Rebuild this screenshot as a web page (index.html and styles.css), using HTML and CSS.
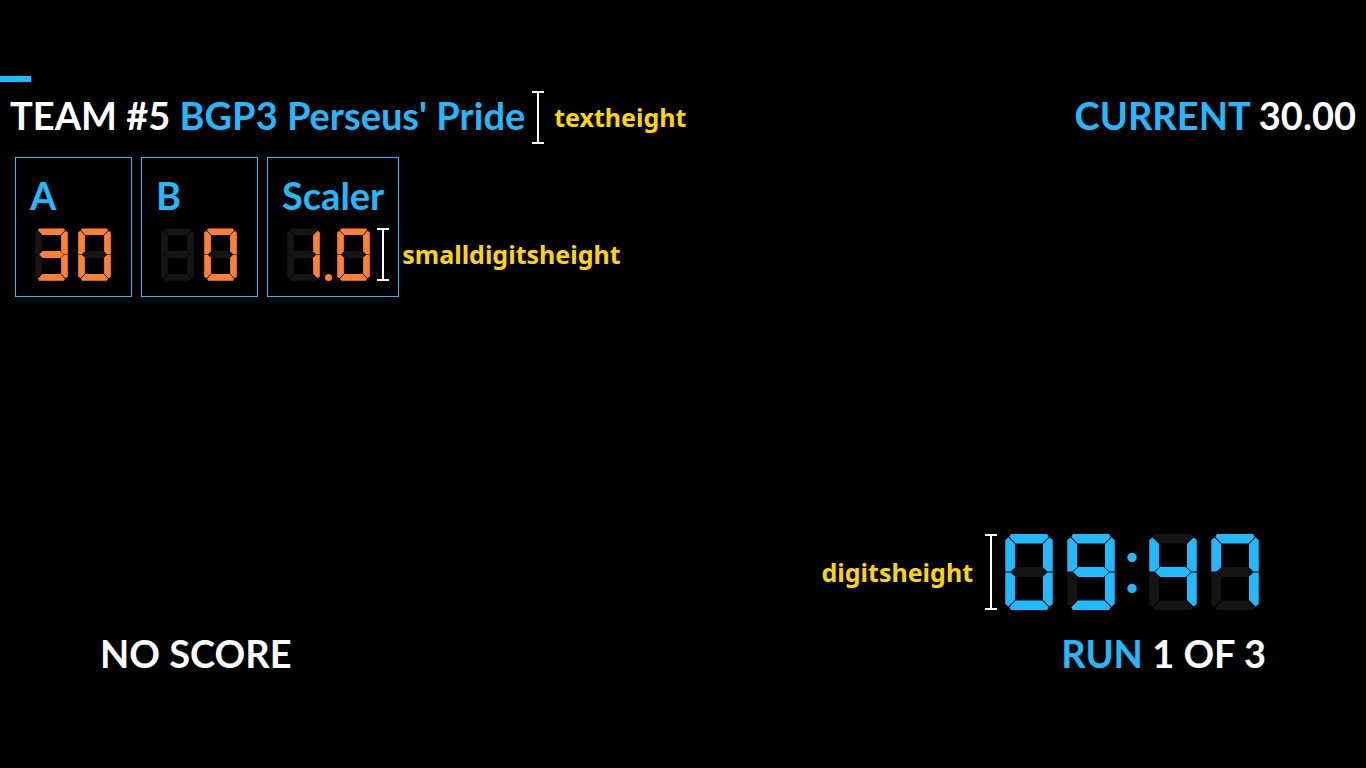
FILE: index.html
```html
<!DOCTYPE html>
<html lang="en">
<head>
<meta charset="utf-8">
<title>Scoreboard</title>
<link rel="stylesheet" href="styles.css">
</head>
<body>
<svg class="defs" aria-hidden="true">
  <defs>
    <path id="a" d="M6 0H42L43.700 2.800L37.200 9.500H10.800L4.300 2.800Z"/>
    <path id="b" d="M44.500 3.600L47.700 6V37.500H42.500L38 33.500V10Z"/>
    <path id="c" d="M42.500 38.500H47.700V70L44.500 72.400L38 66V42.500Z"/>
    <path id="d" d="M6 76H42L43.700 73.200L37.200 66.500H10.800L4.300 73.200Z"/>
    <path id="e" d="M5.500 38.500H.3V70L3.500 72.400L10 66V42.500Z"/>
    <path id="f" d="M3.500 3.600L.3 6V37.500H5.500L10 33.500V10Z"/>
    <path id="g" d="M6 38L11.300 33H36.700L42 38L36.700 43H11.300Z"/>
    <g id="ghost" fill="#151515"><use href="#a"/><use href="#b"/><use href="#c"/><use href="#d"/><use href="#e"/><use href="#f"/><use href="#g"/></g>
    <symbol id="blank" viewBox="0 0 48 76"><use href="#ghost"/></symbol>
    <symbol id="n0" viewBox="0 0 48 76"><use href="#ghost"/><use href="#a"/><use href="#b"/><use href="#c"/><use href="#d"/><use href="#e"/><use href="#f"/></symbol>
    <symbol id="n1" viewBox="0 0 48 76"><use href="#ghost"/><use href="#b"/><use href="#c"/></symbol>
    <symbol id="n3" viewBox="0 0 48 76"><use href="#ghost"/><use href="#a"/><use href="#b"/><use href="#c"/><use href="#d"/><use href="#g"/></symbol>
    <symbol id="n4" viewBox="0 0 48 76"><use href="#ghost"/><use href="#b"/><use href="#c"/><use href="#f"/><use href="#g"/></symbol>
    <symbol id="n7" viewBox="0 0 48 76"><use href="#ghost"/><use href="#a"/><use href="#b"/><use href="#c"/><use href="#f"/></symbol>
    <symbol id="n9" viewBox="0 0 48 76"><use href="#ghost"/><use href="#a"/><use href="#b"/><use href="#c"/><use href="#d"/><use href="#f"/><use href="#g"/></symbol>
  </defs>
</svg>
<div class="board">
  <div class="progress"></div>
  <header class="header">
    <h1 class="title">TEAM #5 <span class="accent">BGP3 Perseus' Pride</span></h1>
    <span class="beam"></span>
    <span class="note">textheight</span>
    <p class="title current"><span class="accent">CURRENT</span> 30.00</p>
  </header>
  <section class="scores">
    <div class="card">
      <h2 class="title accent">A</h2>
      <div class="digits small" role="img" aria-label="30">
        <svg class="digit"><use href="#n3"/></svg>
        <svg class="digit"><use href="#n0"/></svg>
      </div>
    </div>
    <div class="card">
      <h2 class="title accent">B</h2>
      <div class="digits small" role="img" aria-label="0">
        <svg class="digit"><use href="#blank"/></svg>
        <svg class="digit"><use href="#n0"/></svg>
      </div>
    </div>
    <div class="card">
      <h2 class="title accent">Scaler</h2>
      <div class="digits small decimal" role="img" aria-label="1.0">
        <svg class="digit"><use href="#n1"/></svg>
        <svg class="point" viewBox="0 0 17 53"><circle cx="8.500" cy="49.500" r="3.500"/></svg>
        <svg class="digit"><use href="#n0"/></svg>
      </div>
      <div class="callout"><span class="beam"></span><span class="note">smalldigitsheight</span></div>
    </div>
  </section>
  <footer class="footer">
    <p class="title">NO SCORE</p>
    <div class="run">
      <div class="clock">
        <span class="note">digitsheight</span>
        <span class="beam tall"></span>
        <div class="digits large" role="img" aria-label="09:47">
          <svg class="digit"><use href="#n0"/></svg>
          <svg class="digit"><use href="#n9"/></svg>
          <svg class="colon" viewBox="0 0 6 76"><circle cx="3" cy="23.500" r="4.700"/><circle cx="3" cy="54.500" r="4.700"/></svg>
          <svg class="digit"><use href="#n4"/></svg>
          <svg class="digit"><use href="#n7"/></svg>
        </div>
      </div>
      <p class="title"><span class="accent">RUN</span> 1 OF 3</p>
    </div>
  </footer>
</div>
</body>
</html>
```
FILE: styles.css
```css
* { box-sizing: border-box; }
body {
  margin: 0;
  background: #000;
  color: #fff;
  font-family: Lato, "Liberation Sans", sans-serif;
}
.defs { position: absolute; width: 0; height: 0; }
.board {
  display: flex;
  flex-direction: column;
  min-height: 100vh;
  padding: 76px 0 90px;
}
.progress { width: 31px; height: 6px; background: #21b9ff; }
.title {
  margin: 0;
  font-size: 38px;
  font-weight: 700;
  line-height: 46px;
  white-space: nowrap;
}
.accent { color: #21b9ff; }
.header { display: flex; align-items: center; padding: 9px 10px 0; }
.header .title { padding-bottom: 6px; }
.header .beam { margin: 0 10px 0 7px; }
.current { margin-left: auto; }
.note {
  padding-bottom: 1px;
  color: #ffd700;
  font: 700 25px/36px "Noto Sans", sans-serif;
  white-space: nowrap;
}
.beam {
  flex: none;
  width: 12px;
  height: 53px;
  border: solid #fff;
  border-width: 2px 0;
  background: linear-gradient(#fff, #fff) center / 2px 100% no-repeat;
}
.tall { height: 76px; }
.scores { display: flex; gap: 9px; padding: 13px 15px; }
.card {
  position: relative;
  padding: 14px 14px 15px;
  border: 1px solid #21b9ff;
}
.card .title { margin-bottom: 10px; }
.digits { display: flex; }
.small { gap: 10px; padding: 0 6px 0 5px; fill: #ff8030; }
.decimal { gap: 0; }
.small .digit { width: 33px; height: 53px; }
.point { width: 17px; height: 53px; }
.callout {
  position: absolute;
  left: calc(100% - 21px);
  bottom: 15px;
  display: flex;
  align-items: center;
  gap: 13px;
}
.large { gap: 14px; fill: #21b9ff; }
.large .digit { width: 48px; height: 76px; }
.colon { width: 6px; height: 76px; overflow: visible; }
.footer {
  display: flex;
  justify-content: space-between;
  align-items: flex-end;
  margin-top: auto;
  padding: 0 100px;
}
.footer .title { padding-bottom: 2px; }
.run { display: flex; flex-direction: column; align-items: flex-end; gap: 20px; }
.clock { display: flex; align-items: center; padding-right: 7px; }
.clock .beam { margin: 0 8px 0 12px; }
```
